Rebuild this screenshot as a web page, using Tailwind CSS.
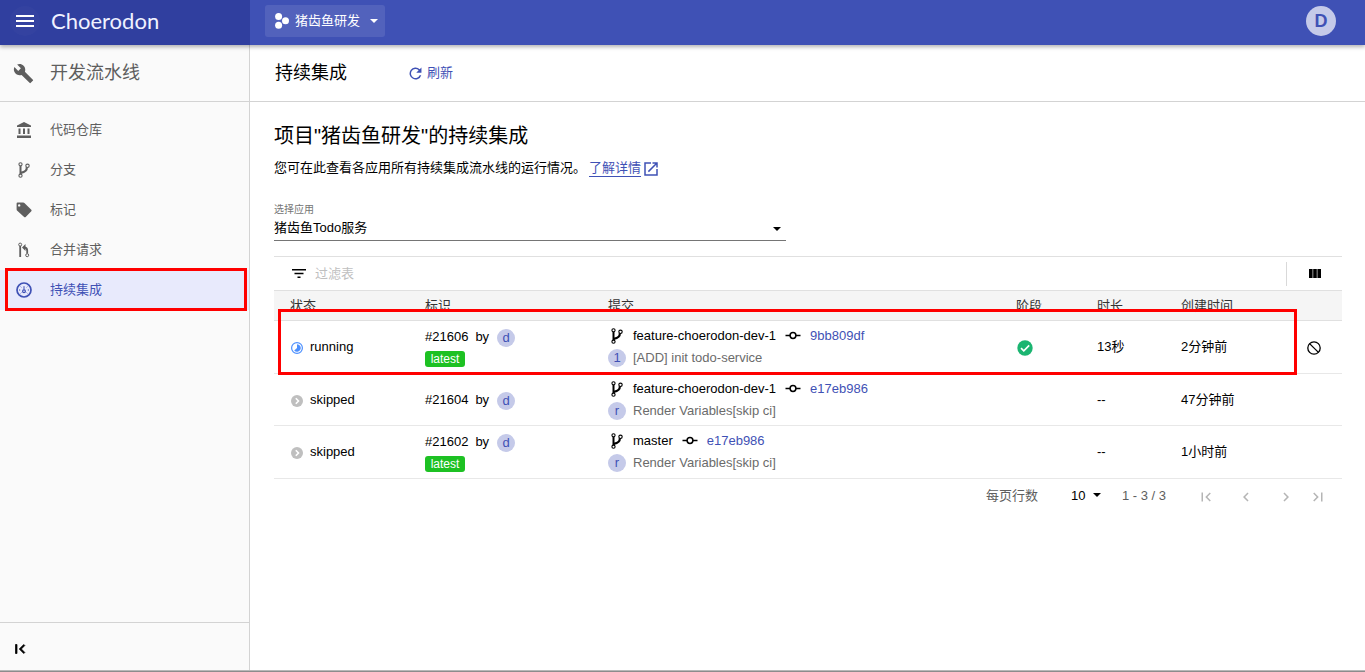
<!DOCTYPE html>
<html lang="zh-CN">
<head>
<meta charset="utf-8">
<meta name="viewport" content="width=device-width, initial-scale=1">
<title>持续集成 - Choerodon</title>
<script src="https://cdn.jsdelivr.net/npm/@tailwindcss/browser@4"></script>
</head>
<body class="min-h-screen flex flex-col bg-white text-[13px] leading-5 text-black font-['Liberation_Sans','Noto_Sans_CJK_SC',sans-serif]">

<svg class="hidden" aria-hidden="true">
  <symbol id="branch" viewBox="0 0 16 16"><g fill="none" stroke="currentColor"><circle cx="4.500" cy="2.300" r="1.600" stroke-width="1.100"/><circle cx="4.500" cy="13.700" r="1.600" stroke-width="1.100"/><circle cx="11.500" cy="3.800" r="1.700" stroke-width="1.100"/><path d="M4.500 4v8" stroke-width="2"/><path d="M10.800 5.300c.2 3.200-1.200 4.600-6.100 5.600" stroke-width="2.200"/></g></symbol>
  <symbol id="commit" viewBox="0 0 16 16"><g fill="none" stroke="currentColor" stroke-width="1.500"><circle cx="8" cy="7.500" r="2.900"/><path d="M.5 7.500H5M11 7.500h4.500"/></g></symbol>
  <symbol id="skip" viewBox="0 0 12 12"><circle cx="6" cy="6" r="6" fill="#bfbfbf"/><path d="M4.800 3.200 7.500 6 4.800 8.800" fill="none" stroke="#fff" stroke-width="1.600"/></symbol>
  <symbol id="caret" viewBox="0 0 10 5"><path d="M0 0h10L5 5z" fill="currentColor"/></symbol>
  <symbol id="first" viewBox="0 0 24 24"><path d="M18.410 16.590 13.820 12l4.590-4.590L17 6l-6 6 6 6zM6 6h2v12H6z" fill="currentColor"/></symbol>
  <symbol id="prev" viewBox="0 0 24 24"><path d="M15.410 7.410 14 6l-6 6 6 6 1.410-1.410L10.830 12z" fill="currentColor"/></symbol>
  <symbol id="next" viewBox="0 0 24 24"><path d="M10 6 8.590 7.410 13.170 12l-4.580 4.590L10 18l6-6z" fill="currentColor"/></symbol>
  <symbol id="last" viewBox="0 0 24 24"><path d="M5.590 7.410 10.180 12l-4.590 4.590L7 18l6-6-6-6zM16 6h2v12h-2z" fill="currentColor"/></symbol>
</svg>

<header class="relative z-10 flex h-[45px] bg-[#3f51b5] text-white shadow-[0_2px_4px_rgba(0,0,0,0.3)]">
  <div class="flex w-[250px] shrink-0 items-center gap-[11px] bg-[#303f9f] pb-[3px] pl-[10px]">
    <button type="button" aria-label="菜单" class="grid size-[30px] place-items-center rounded-full bg-white/2">
      <svg class="h-3 w-[18px]" viewBox="0 0 18 12" fill="currentColor"><path d="M0 0h18v2H0zM0 5h18v2H0zM0 10h18v2H0z"/></svg>
    </button>
    <span class="text-[22px] leading-8 text-[#f0f2ff] font-['Lato',sans-serif]">Choerodon</span>
  </div>
  <div class="flex flex-1 items-center justify-between pl-[15px] pr-[29px]">
    <button type="button" class="mb-1 flex h-8 w-[120px] items-center rounded-[3px] bg-white/10 pl-[10px]">
      <svg class="h-4 w-[14px]" viewBox="0 0 14 16" fill="currentColor"><circle cx="3.600" cy="3.500" r="3.500"/><circle cx="3.600" cy="12.200" r="3.500"/><circle cx="10.500" cy="7.800" r="3.500"/></svg>
      <span class="ml-[6px]">猪齿鱼研发</span>
      <svg class="ml-[10px] mt-px h-1 w-2"><use href="#caret"/></svg>
    </button>
    <button type="button" class="mb-1 size-[30px] rounded-full bg-[#c5cae9] text-[18px] font-bold leading-[30px] text-[#3f51b5]">D</button>
  </div>
</header>

<div class="flex flex-1">
  <aside class="flex w-[250px] shrink-0 flex-col border-r border-[#d3d3d3] bg-[#fafafa] text-[#5e5e5e]">
    <h2 class="flex h-[57px] items-center gap-4 border-b border-[#d3d3d3] pl-[13px] text-[18px]">
      <svg class="size-[21px]" viewBox="0 0 24 24" fill="currentColor"><path d="m22.700 19-9.100-9.100c.9-2.300.4-5-1.500-6.900-2-2-5-2.400-7.400-1.300L9 6 6 9 1.600 4.700C.4 7.100.9 10.100 2.900 12.100c1.900 1.900 4.600 2.400 6.900 1.500l9.100 9.100c.4.4 1 .4 1.400 0l2.300-2.300c.5-.4.5-1.100.1-1.400z"/></svg>
      <span>开发流水线</span>
    </h2>
    <nav class="flex flex-1 flex-col pt-2">
      <a href="#" class="flex h-10 items-center gap-[18px] pl-4">
        <svg class="size-4" viewBox="0 0 16 16" fill="currentColor"><path d="M8 0 15 3.500V5H1V3.500zM2.500 6.500h2V12h-2zM7 6.500h2V12H7zM11.500 6.500h2V12h-2zM1 13.500h14V16H1z"/></svg><span>代码仓库</span></a>
      <a href="#" class="flex h-10 items-center gap-[18px] pl-4"><svg class="size-4"><use href="#branch"/></svg><span>分支</span></a>
      <a href="#" class="flex h-10 items-center gap-[18px] pl-4">
        <svg class="size-4" viewBox="0 0 16 16" fill="currentColor"><path fill-rule="evenodd" d="M1.600.6h5.700q.7 0 1.100.4l6.900 6.700q.7.8 0 1.600l-5.600 5.700q-.8.700-1.600 0L1 8.400Q.6 8 .6 7.300V1.600q0-1 1-1zm1.600 1.600a1.200 1.200 0 1 0 0 2.400 1.200 1.200 0 0 0 0-2.400z"/></svg><span>标记</span></a>
      <a href="#" class="flex h-10 items-center gap-[18px] pl-4">
        <svg class="size-4" viewBox="0 0 16 16" fill="none" stroke="currentColor"><circle cx="4.200" cy="2.600" r="1.500"/><circle cx="11.200" cy="13.200" r="1.500"/><path d="M4.200 4.100V15M8 5.500c2.600 0 3.200.8 3.200 3v3" stroke-width="1.800"/><path d="M9.500 2 6 5.500l3.500 3.500z" fill="currentColor" stroke="none"/></svg><span>合并请求</span></a>
      <a href="#" aria-current="page" class="relative flex h-10 items-center gap-[18px] bg-[#e8eafc] pl-4 text-[#3f51b5]">
        <svg class="size-4" viewBox="0 0 16 16" fill="none" stroke="currentColor"><circle cx="8" cy="8" r="7" stroke-width="1.700"/><circle cx="8" cy="9.200" r="1.400" stroke-width="1.200"/><path d="M8 4.200v3.500M3 8h1.200M11.800 8H13M4.700 4.700l.6.600M11.300 4.700l-.6.600M4.700 11.300l.6-.6M11.300 11.300l-.6-.6"/></svg><span>持续集成</span>
        <span class="absolute -top-[2px] -bottom-px left-[5px] right-[2px] border-3 border-[#ff0000]"></span>
      </a>
    </nav>
    <div class="flex h-[50px] items-center border-t border-[#d3d3d3] pl-[11px] pt-[3px]">
      <button type="button" aria-label="收起菜单" class="text-black"><svg class="size-[18px]" stroke="currentColor" stroke-width="1"><use href="#first"/></svg></button>
    </div>
  </aside>

  <main class="min-w-0 flex-1">
    <div class="flex h-[57px] items-center border-b border-[#d3d3d3] pl-[25px]">
      <h1 class="w-[134px] text-[18px]">持续集成</h1>
      <button type="button" class="flex items-center gap-[5px] text-[#3f51b5]">
        <svg class="size-[13px]" viewBox="0 0 24 24" fill="currentColor"><path d="M19.800 4.200A11 11 0 1 0 22.600 15h-2.900A8.250 8.250 0 1 1 17.800 6.200L13.400 10.600H23V1z"/></svg>
        <span>刷新</span></button>
    </div>

    <div class="pl-6 pr-[23px] pt-5">
      <h2 class="text-[20px] leading-7">项目"猪齿鱼研发"的持续集成</h2>
      <p class="mt-2 flex items-center">您可在此查看各应用所有持续集成流水线的运行情况。
        <a href="#" class="ml-[3px] flex items-center gap-px text-[#3f51b5]"><span class="border-b border-[#3f51b5] leading-4">了解详情</span>
          <svg class="mt-[2px] size-[18px]" viewBox="0 0 24 24" fill="currentColor"><path d="M19 19H5V5h7V3H3v18h18v-9h-2zM14 3v2h3.600L7.800 14.800l1.400 1.400L19 6.400V10h2V3z"/></svg></a></p>

      <div class="relative mt-[26px] w-[512px] max-w-full border-b border-[#757575]">
        <label for="app" class="block text-[10px] leading-3 text-[#757575]">选择应用</label>
        <select id="app" class="block h-6 w-full appearance-none bg-transparent outline-none"><option>猪齿鱼Todo服务</option></select>
        <svg class="pointer-events-none absolute bottom-[9px] right-[5px] h-1 w-2"><use href="#caret"/></svg>
      </div>

      <section class="relative mt-[15px] border-t border-[#e0e0e0]">
        <div class="flex h-[33px] items-center pl-[18px]">
          <svg class="h-[9px] w-[14px]" viewBox="0 0 14 9" fill="currentColor"><path d="M0 0h14v1.600H0zM2.500 3.700h9v1.600h-9zM5.500 7.400h3V9h-3z"/></svg>
          <input type="text" aria-label="过滤表" placeholder="过滤表" class="ml-[9px] h-6 flex-1 outline-none placeholder:text-[#bfbfbf]">
          <div class="flex h-6 w-14 items-center border-l border-[#d9d9d9] pl-[22px]">
            <button type="button" aria-label="列设置"><svg class="h-[9px] w-3" viewBox="0 0 12 9"><path d="M0 0h3.600v9H0zM4.200 0h3.600v9H4.200zM8.400 0H12v9H8.400z"/></svg></button>
          </div>
        </div>

        <table class="w-full table-fixed border-collapse">
          <colgroup><col class="w-[135px]"><col class="w-[183px]"><col><col class="w-[81px]"><col class="w-[84px]"><col class="w-[126px]"><col class="w-[51px]"></colgroup>
          <thead>
            <tr class="h-[30px] border-y border-[#e0e0e0] bg-[#f5f5f5] text-left text-[#333]">
              <th class="pl-4 font-normal">状态</th><th class="pl-4 font-normal">标识</th><th class="pl-4 font-normal">提交</th><th class="pl-4 font-normal">阶段</th><th class="pl-4 font-normal">时长</th><th class="pl-4 font-normal">创建时间</th><th></th>
            </tr>
          </thead>
          <tbody>
            <tr class="h-[53px] border-b border-[#e8e8e8]">
              <td class="pl-[17px]"><div class="flex items-center gap-[7px]"><svg class="mt-[2px] size-3" viewBox="0 0 12 12"><circle cx="6" cy="6" r="5.400" fill="none" stroke="#4d90fe" stroke-width="1.200"/><path d="M6 2.300a3.700 3.700 0 1 1-2.800 6.100L6 6z" fill="#4d90fe"/></svg>running</div></td>
              <td class="pl-4"><div class="flex items-center gap-[7px]"><span>#21606</span><span>by</span><span class="ml-px mt-[2px] size-[18px] rounded-full bg-[#c5cae9] text-center leading-[18px] text-[#3f51b5]">d</span></div>
                <span class="mt-1 block h-4 w-10 rounded-[3px] bg-[#1dc123] text-center text-[12px] leading-4 text-white">latest</span></td>
              <td class="pl-4"><div class="flex items-center"><svg class="ml-px size-4"><use href="#branch"/></svg><span class="ml-2">feature-choerodon-dev-1</span><svg class="mx-[9px] size-4"><use href="#commit"/></svg><a href="#" class="text-[#3f51b5]">9bb809df</a></div>
                <div class="mt-[2px] flex items-center gap-[7px] text-[#6b6b6b]"><span class="size-[18px] rounded-full bg-[#c5cae9] text-center leading-[18px] text-[#3f51b5]">1</span>[ADD] init todo-service</div></td>
              <td class="pl-[17px]"><svg class="mt-[2px] size-4" viewBox="0 0 16 16"><circle cx="8" cy="8" r="7.700" fill="#1bb571"/><path d="m4 8.200 2.800 2.700 5.400-5.500" fill="none" stroke="#fff" stroke-width="1.600"/></svg></td>
              <td class="pl-4">13秒</td><td class="pl-4">2分钟前</td>
              <td class="pl-4"><button type="button" aria-label="取消" class="mt-[2px] block"><svg class="size-[14px]" viewBox="0 0 14 14" fill="none" stroke="currentColor" stroke-width="1.300"><circle cx="7" cy="7" r="6.200"/><path d="m2.600 2.600 8.800 8.800"/></svg></button></td>
            </tr>
            <tr class="h-[52px] border-b border-[#e8e8e8]">
              <td class="pl-[17px]"><div class="flex items-center gap-[7px]"><svg class="mt-[2px] size-3"><use href="#skip"/></svg>skipped</div></td>
              <td class="pl-4"><div class="flex items-center gap-[7px]"><span>#21604</span><span>by</span><span class="ml-px mt-[2px] size-[18px] rounded-full bg-[#c5cae9] text-center leading-[18px] text-[#3f51b5]">d</span></div></td>
              <td class="pl-4"><div class="flex items-center"><svg class="ml-px size-4"><use href="#branch"/></svg><span class="ml-2">feature-choerodon-dev-1</span><svg class="mx-[9px] size-4"><use href="#commit"/></svg><a href="#" class="text-[#3f51b5]">e17eb986</a></div>
                <div class="mt-[2px] flex items-center gap-[7px] text-[#6b6b6b]"><span class="size-[18px] rounded-full bg-[#c5cae9] text-center leading-[18px] text-[#3f51b5]">r</span>Render Variables[skip ci]</div></td>
              <td></td><td class="pl-4">--</td><td class="pl-4">47分钟前</td><td></td>
            </tr>
            <tr class="h-[53px] border-b border-[#e8e8e8]">
              <td class="pl-[17px]"><div class="flex items-center gap-[7px]"><svg class="mt-[2px] size-3"><use href="#skip"/></svg>skipped</div></td>
              <td class="pl-4"><div class="flex items-center gap-[7px]"><span>#21602</span><span>by</span><span class="ml-px mt-[2px] size-[18px] rounded-full bg-[#c5cae9] text-center leading-[18px] text-[#3f51b5]">d</span></div>
                <span class="mt-1 block h-4 w-10 rounded-[3px] bg-[#1dc123] text-center text-[12px] leading-4 text-white">latest</span></td>
              <td class="pl-4"><div class="flex items-center"><svg class="ml-px size-4"><use href="#branch"/></svg><span class="ml-2">master</span><svg class="mx-[9px] size-4"><use href="#commit"/></svg><a href="#" class="text-[#3f51b5]">e17eb986</a></div>
                <div class="mt-[2px] flex items-center gap-[7px] text-[#6b6b6b]"><span class="size-[18px] rounded-full bg-[#c5cae9] text-center leading-[18px] text-[#3f51b5]">r</span>Render Variables[skip ci]</div></td>
              <td></td><td class="pl-4">--</td><td class="pl-4">1小时前</td><td></td>
            </tr>
          </tbody>
        </table>
        <div class="pointer-events-none absolute left-1 right-[45px] top-[52px] h-[66px] border-3 border-[#ff0000]"></div>
      </section>

      <div class="flex h-[34px] items-center justify-end pr-[15px] text-[#5e5e5e]">
        <label for="size">每页行数</label>
        <div class="relative ml-[33px] w-[30px] text-black">
          <select id="size" class="block h-5 w-full appearance-none bg-transparent outline-none"><option>10</option></select>
          <svg class="pointer-events-none absolute right-0 top-[7px] h-1 w-2"><use href="#caret"/></svg>
        </div>
        <span class="ml-[21px]">1 - 3 / 3</span>
        <div class="ml-[31px] flex items-center pt-px text-[#b5b5b5]">
          <button type="button" aria-label="第一页" disabled><svg class="size-[18px]"><use href="#first"/></svg></button>
          <button type="button" aria-label="上一页" disabled class="ml-[22px]"><svg class="size-[18px]"><use href="#prev"/></svg></button>
          <button type="button" aria-label="下一页" disabled class="ml-[22px]"><svg class="size-[18px]"><use href="#next"/></svg></button>
          <button type="button" aria-label="最后一页" disabled class="ml-[14px]"><svg class="size-[18px]"><use href="#last"/></svg></button>
        </div>
      </div>
    </div>
  </main>
</div>
<div class="fixed inset-x-0 bottom-0 h-[2px] border-t border-[#b8b8b8] bg-[#8c8c8c]"></div>
</body>
</html>
